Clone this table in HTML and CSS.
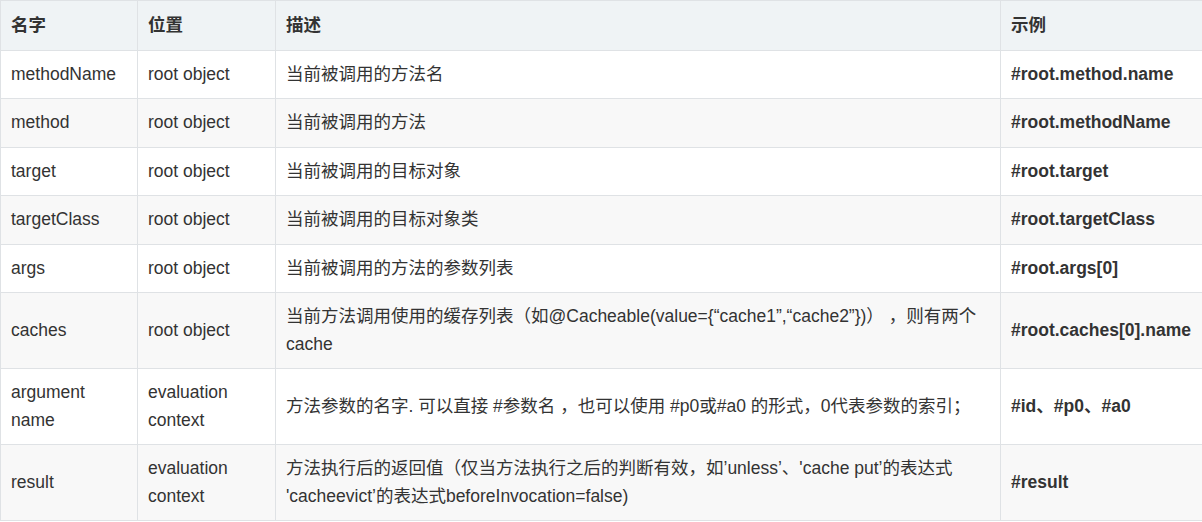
FILE: index.html
```html
<!DOCTYPE html>
<html lang="zh">
<head>
<meta charset="utf-8">
<title>SpEL</title>
<link rel="stylesheet" href="styles.css">
</head>
<body>
<table class="spel">
  <colgroup>
    <col class="c1"><col class="c2"><col class="c3"><col class="c4">
  </colgroup>
  <thead>
    <tr><th>名字</th><th>位置</th><th>描述</th><th>示例</th></tr>
  </thead>
  <tbody>
    <tr><td>methodName</td><td>root object</td><td>当前被调用的方法名</td><td class="ex">#root.method.name</td></tr>
    <tr><td>method</td><td>root object</td><td>当前被调用的方法</td><td class="ex">#root.methodName</td></tr>
    <tr><td>target</td><td>root object</td><td>当前被调用的目标对象</td><td class="ex">#root.target</td></tr>
    <tr><td>targetClass</td><td>root object</td><td>当前被调用的目标对象类</td><td class="ex">#root.targetClass</td></tr>
    <tr><td>args</td><td>root object</td><td>当前被调用的方法的参数列表</td><td class="ex">#root.args[0]</td></tr>
    <tr><td>caches</td><td>root object</td><td>当前方法调用使用的缓存列表（如@Cacheable(value={“cache1”,“cache2”})） ，则有两个cache</td><td class="ex">#root.caches[0].name</td></tr>
    <tr><td>argument name</td><td>evaluation context</td><td>方法参数的名字. 可以直接 #参数名 ，也可以使用 #p0或#a0 的形式，0代表参数的索引；</td><td class="ex">#id、#p0、#a0</td></tr>
    <tr><td>result</td><td>evaluation context</td><td>方法执行后的返回值（仅当方法执行之后的判断有效，如’unless’、'cache put’的表达式 'cacheevict’的表达式beforeInvocation=false)</td><td class="ex">#result</td></tr>
  </tbody>
</table>
</body>
</html>
```
FILE: styles.css
```css
html, body {
  margin: 0;
  padding: 0;
  background: #fff;
}
.spel {
  width: 1202px;
  border-collapse: collapse;
  table-layout: fixed;
  font-family: "Liberation Sans", Arial, "Noto Sans CJK SC", sans-serif;
  font-size: 17.5px;
  line-height: 27.5px;
  color: #333;
}
.c1 { width: 137px; }
.c2 { width: 138px; }
.c3 { width: 725px; }
.c4 { width: 202px; }
.spel th, .spel td {
  border: 1px solid #dfe2e5;
  padding: 10px 10px;
  text-align: left;
  vertical-align: middle;
}
.spel th {
  background: #eff3f5;
  font-weight: bold;
  padding: 11px 10px 10px;
}
.spel tbody tr:nth-child(even) {
  background: #f8f8f8;
}
.spel td.ex {
  font-weight: bold;
  white-space: nowrap;
}
```
